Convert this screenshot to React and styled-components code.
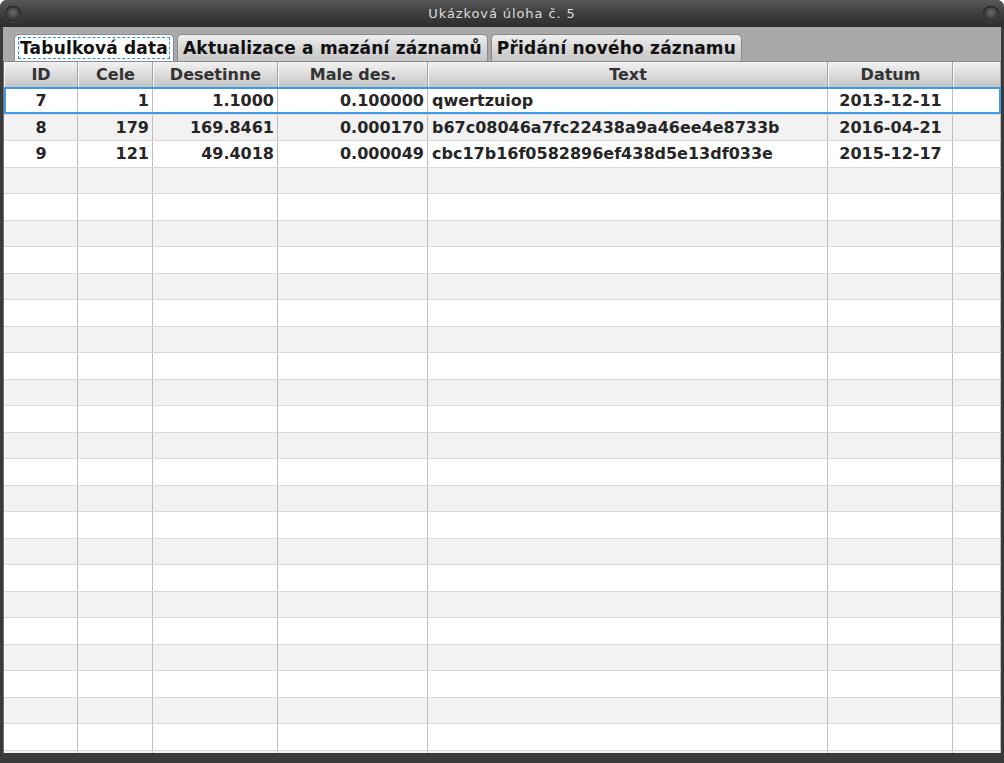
import React from 'react'
import styled, { createGlobalStyle } from 'styled-components'

const GlobalStyle = createGlobalStyle`
  html, body {
    margin: 0;
    padding: 0;
    background: #ffffff;
  }
  body {
    font-family: "DejaVu Sans", "Liberation Sans", sans-serif;
  }
`

const COLUMNS = '74px 75px 125px 150px 400px 125px 1fr'

const rows = [
  ['7', '1', '1.1000', '0.100000', 'qwertzuiop', '2013-12-11'],
  ['8', '179', '169.8461', '0.000170', 'b67c08046a7fc22438a9a46ee4e8733b', '2016-04-21'],
  ['9', '121', '49.4018', '0.000049', 'cbc17b16f0582896ef438d5e13df033e', '2015-12-17'],
]

const columns = [
  { title: 'ID', align: 'center' },
  { title: 'Cele', align: 'right' },
  { title: 'Desetinne', align: 'right' },
  { title: 'Male des.', align: 'right' },
  { title: 'Text', align: 'left' },
  { title: 'Datum', align: 'center' },
]

const Window = styled.div`
  width: 1004px;
  height: 763px;
  display: flex;
  flex-direction: column;
  background: #3a3a3a;
  border-radius: 7px 7px 0 0;
  overflow: hidden;
`

const TitleBar = styled.div`
  height: 27px;
  flex: none;
  display: flex;
  align-items: center;
  justify-content: space-between;
  padding: 0 5px;
  background: linear-gradient(#585858, #3e3e3e 50%, #2e2e2e);
  color: #dcdcdc;
  font-size: 13px;
  letter-spacing: 0.9px;
`

const Knob = styled.span`
  width: 16px;
  height: 16px;
  border-radius: 50%;
  background: radial-gradient(circle at 50% 40%, #6a6a6a, #3a3a3a 55%, #222 100%);
  box-shadow: inset 0 1px 1px rgba(0, 0, 0, 0.6), 0 1px 0 rgba(255, 255, 255, 0.12);
`

const Body = styled.div`
  flex: 1;
  display: flex;
  flex-direction: column;
  margin: 0 3px 10px 3px;
  background: #a9a9a9;
  min-height: 0;
`

const TabStrip = styled.div`
  height: 34px;
  flex: none;
  display: flex;
  align-items: flex-end;
  gap: 3px;
  padding-left: 11px;
  box-sizing: border-box;
`

const Tab = styled.div`
  height: 27px;
  box-sizing: border-box;
  padding: 0 4px 0 4px;
  display: flex;
  align-items: center;
  border: 1px solid #8a8a8a;
  border-bottom: none;
  border-radius: 5px 5px 0 0;
  background: ${p => (p.$active ? '#ffffff' : 'linear-gradient(#eeeeee, #d4d4d4 60%, #c8c8c8)')};
  color: #111;
  font-size: 17px;
  font-weight: bold;
  letter-spacing: 0.2px;
  white-space: nowrap;
`

const TabLabel = styled.span`
  padding: 0 1px;
  line-height: 20px;
  outline: ${p => (p.$focused ? '1px dashed #2a8fe8' : 'none')};
`

const Table = styled.div`
  flex: 1;
  min-height: 0;
  overflow: hidden;
  background: #ffffff;
  border-left: 1px solid #707070;
  border-top: 1px solid #8c8c8c;
`

const HeaderRow = styled.div`
  display: grid;
  grid-template-columns: ${COLUMNS};
  height: 25px;
  border-bottom: 1px solid #8c8c8c;
`

const HeaderCell = styled.div`
  display: flex;
  align-items: center;
  justify-content: center;
  background: linear-gradient(#f2f2f2, #dcdcdc 50%, #c4c4c4);
  border-right: 1px solid #a4a4a4;
  border-left: 1px solid #f8f8f8;
  color: #333;
  font-size: 16px;
  font-weight: bold;
`

const Row = styled.div`
  display: grid;
  grid-template-columns: ${COLUMNS};
  height: 26.5px;
  box-sizing: border-box;
  position: relative;
  background: ${p => (p.$striped ? '#f2f2f2' : '#ffffff')};
  border-bottom: 1px solid #dadada;
`

const SelectionFrame = styled.div`
  position: absolute;
  inset: -1px 0 0 0;
  border: 2px solid #3d9be9;
  pointer-events: none;
`

const Cell = styled.div`
  display: flex;
  align-items: center;
  justify-content: ${p => (p.$align === 'right' ? 'flex-end' : p.$align === 'left' ? 'flex-start' : 'center')};
  padding: 0 3px 0 4px;
  border-right: 1px solid #bdbdbd;
  color: #262626;
  font-size: 16px;
  font-weight: bold;
  white-space: nowrap;
  overflow: hidden;
`

const EMPTY_ROWS = 23

export default function App() {
  const allRows = [...rows, ...Array.from({ length: EMPTY_ROWS }, () => ['', '', '', '', '', ''])]
  return (
    <>
      <GlobalStyle />
      <Window>
        <TitleBar>
          <Knob />
          <span>Ukázková úloha č. 5</span>
          <Knob />
        </TitleBar>
        <Body>
          <TabStrip>
            <Tab $active>
              <TabLabel $focused>Tabulková data</TabLabel>
            </Tab>
            <Tab>
              <TabLabel>Aktualizace a mazání záznamů</TabLabel>
            </Tab>
            <Tab>
              <TabLabel>Přidání nového záznamu</TabLabel>
            </Tab>
          </TabStrip>
          <Table>
            <HeaderRow>
              {columns.map(c => (
                <HeaderCell key={c.title}>{c.title}</HeaderCell>
              ))}
              <HeaderCell />
            </HeaderRow>
            {allRows.map((r, i) => (
              <Row key={i} $striped={i % 2 === 1}>
                {r.map((v, j) => (
                  <Cell key={j} $align={columns[j].align}>{v}</Cell>
                ))}
                <Cell />
                {i === 0 && <SelectionFrame />}
              </Row>
            ))}
          </Table>
        </Body>
      </Window>
    </>
  )
}
